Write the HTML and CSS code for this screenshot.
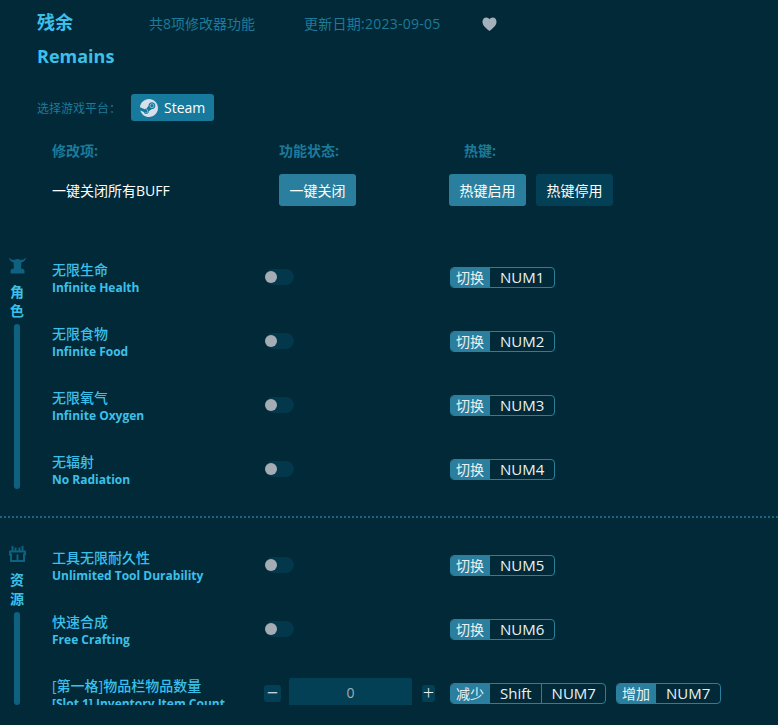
FILE: index.html
```html
<!DOCTYPE html>
<html lang="zh">
<head>
<meta charset="utf-8">
<title>残余 Remains</title>
<link rel="stylesheet" href="styles.css">
</head>
<body>
<div class="app">
  <header class="head">
    <div class="title-row">
      <h1 class="title">残余</h1>
      <span class="meta meta-count">共8项修改器功能</span>
      <span class="meta meta-date">更新日期:2023-09-05</span>
      <svg class="heart" viewBox="0 0 16 15"><path d="M8 15C3 11 .5 8.500 .5 5 .5 2.200 2.500 .5 4.500 .5 6 .5 7.300 1.300 8 2.500 8.700 1.300 10 .5 11.500 .5 13.500 .5 15.500 2.200 15.500 5 15.500 8.500 13 11 8 15z"/></svg>
    </div>
    <h2 class="title-en">Remains</h2>
    <div class="platform">
      <span class="platform-label">选择游戏平台：</span>
      <span class="steam">
        <svg class="steam-icon" viewBox="0 0 24 24"><path d="M11.979 0C5.678 0 .511 4.860 .022 11.037l6.432 2.658c.545-.371 1.203-.59 1.912-.59.063 0 .125.004.188.006l2.861-4.142V8.910c0-2.495 2.028-4.524 4.524-4.524 2.494 0 4.524 2.031 4.524 4.527s-2.030 4.525-4.524 4.525h-.105l-4.076 2.911c0 .052.004.105.004.159 0 1.875-1.515 3.396-3.390 3.396-1.635 0-3.016-1.173-3.331-2.727L.436 15.270C1.862 20.307 6.486 24 11.979 24c6.627 0 11.999-5.373 11.999-12S18.605 0 11.979 0zM7.540 18.210l-1.473-.61c.262.543.714.999 1.314 1.250 1.297.539 2.793-.076 3.332-1.375.263-.63.264-1.319.005-1.949s-.75-1.121-1.377-1.383c-.624-.26-1.290-.249-1.878-.03l1.523.63c.956.4 1.409 1.500 1.009 2.455-.397.957-1.497 1.410-2.454 1.012zm11.415-9.303c0-1.662-1.353-3.015-3.015-3.015-1.665 0-3.015 1.353-3.015 3.015 0 1.665 1.350 3.015 3.015 3.015 1.663 0 3.015-1.350 3.015-3.015zm-5.273-.005c0-1.252 1.013-2.266 2.265-2.266 1.249 0 2.266 1.014 2.266 2.266 0 1.251-1.017 2.265-2.266 2.265-1.253 0-2.265-1.014-2.265-2.265z"/></svg>
        Steam
      </span>
    </div>
  </header>

  <div class="cols">
    <span class="col-name">修改项:</span>
    <span class="col-state">功能状态:</span>
    <span class="col-key">热键:</span>
  </div>

  <div class="master">
    <span class="master-name">一键关闭所有BUFF</span>
    <button class="btn btn-on btn-close">一键关闭</button>
    <button class="btn btn-on">热键启用</button>
    <button class="btn btn-off">热键停用</button>
  </div>

  <div class="list">
    <section class="section section-first">
      <aside class="cat">
        <svg class="cat-icon" viewBox="0 0 17 17"><path d="M0 .5C.3 3 1.500 4.700 4.500 5.300L5 11.500C3 11.500 1.500 12.500 1.500 14V16.500H15.500V14C15.500 12.500 14 11.500 12 11.500L12.500 5.300C15.500 4.700 16.700 3 17 .5 15.500 2.200 13.500 3 11.700 3 10.700 2.300 9.500 1.900 8.500 1.900S6.300 2.300 5.300 3C3.500 3 1.500 2.200 0 .5z"/></svg>
        <span class="cat-char">角</span>
        <span class="cat-char">色</span>
        <span class="cat-bar"></span>
      </aside>
      <div class="rows">
        <div class="row">
          <div class="name"><b>无限生命</b><b>Infinite Health</b></div>
          <span class="toggle"></span>
          <div class="keys"><span class="key"><i>切换</i><em>NUM1</em></span></div>
        </div>
        <div class="row">
          <div class="name"><b>无限食物</b><b>Infinite Food</b></div>
          <span class="toggle"></span>
          <div class="keys"><span class="key"><i>切换</i><em>NUM2</em></span></div>
        </div>
        <div class="row">
          <div class="name"><b>无限氧气</b><b>Infinite Oxygen</b></div>
          <span class="toggle"></span>
          <div class="keys"><span class="key"><i>切换</i><em>NUM3</em></span></div>
        </div>
        <div class="row">
          <div class="name"><b>无辐射</b><b>No Radiation</b></div>
          <span class="toggle"></span>
          <div class="keys"><span class="key"><i>切换</i><em>NUM4</em></span></div>
        </div>
      </div>
    </section>

    <section class="section">
      <aside class="cat">
        <svg class="cat-icon" viewBox="0 0 17 17"><path class="chest" d="M.8 6.500H16.200V9.500H15V16H2V9.500H.8zM3.500 1V6.500M6.500 2.500V6.500M10.500 2.500V6.500M13.500 1V6.500M8.500 9.500V16"/></svg>
        <span class="cat-char">资</span>
        <span class="cat-char">源</span>
        <span class="cat-bar"></span>
      </aside>
      <div class="rows">
        <div class="row">
          <div class="name"><b>工具无限耐久性</b><b>Unlimited Tool Durability</b></div>
          <span class="toggle"></span>
          <div class="keys"><span class="key"><i>切换</i><em>NUM5</em></span></div>
        </div>
        <div class="row">
          <div class="name"><b>快速合成</b><b>Free Crafting</b></div>
          <span class="toggle"></span>
          <div class="keys"><span class="key"><i>切换</i><em>NUM6</em></span></div>
        </div>
        <div class="row">
          <div class="name"><b>[第一格]物品栏物品数量</b><b>[Slot 1] Inventory Item Count</b></div>
          <div class="stepper">
            <span class="step step-minus">−</span>
            <span class="value">0</span>
            <span class="step step-plus">+</span>
          </div>
          <div class="keys">
            <span class="key"><i>减少</i><em>Shift</em><em>NUM7</em></span>
            <span class="key"><i>增加</i><em>NUM7</em></span>
          </div>
        </div>
      </div>
    </section>
  </div>
</div>
</body>
</html>
```

FILE: styles.css
```css
* { box-sizing: border-box; }
html, body { margin: 0; height: 100%; overflow: hidden; }
body {
  background: #012937;
  font-family: "Open Sans", "Noto Sans CJK SC", sans-serif;
  font-size: 14px;
  color: #fff;
}
.app { height: 725px; }

.head { padding: 10px 0 0 37px; }
.title-row { display: flex; align-items: center; height: 24px; }
.title { margin: 0; width: 112px; font-size: 18px; line-height: 24px; font-weight: 700; color: #3cc0ea; }
.meta { margin-top: 2px; font-size: 14px; color: #1d7a99; }
.meta-count { width: 155px; }
.meta-date { width: 178px; letter-spacing: .25px; }
.heart { width: 15px; height: 14px; margin-top: 3px; fill: #a4b1bb; }
.title-en { margin: 10px 0 0; font-size: 18px; line-height: 24px; font-weight: 700; color: #3cc0ea; }
.platform { display: flex; align-items: center; margin-top: 26px; height: 27px; }
.platform-label { width: 94px; font-size: 12px; color: #1d7a99; }
.steam {
  display: flex; align-items: center; gap: 6px;
  width: 83px; height: 27px; padding-left: 9px;
  background: #177a9c; border-radius: 3px;
  font-size: 14px; color: #fff;
}
.steam-icon { width: 18px; height: 18px; fill: #d8dfea; }

.cols { display: flex; margin-top: 21px; padding-left: 52px; height: 18px; line-height: 18px; font-size: 14px; font-weight: 700; color: #1d7a99; }
.col-name { width: 227px; }
.col-state { width: 185px; }

.master { display: flex; align-items: center; margin-top: 14px; padding-left: 52px; height: 32px; }
.master-name { width: 227px; font-size: 14px; }
.btn {
  width: 77px; height: 32px; padding: 0; border: 0; border-radius: 3px;
  font: inherit; font-size: 14px; color: #fff;
}
.btn-on { background: #2a7f9e; }
.btn-off { background: #033f55; margin-left: 10px; }
.btn-close { margin-right: 93px; }

.list { margin-top: 39px; height: 460px; overflow: hidden; }
.section { display: flex; height: 172px; }
.section-first { height: 273px; margin-bottom: 15px; padding-bottom: 15px; border-bottom: 2px dotted #1d6580; }

.cat { display: flex; flex-direction: column; align-items: center; width: 34px; padding-top: 12px; }
.cat-icon { width: 17px; height: 17px; margin-bottom: 8px; fill: #0f6180; }
.chest { fill: none; stroke: #0f6180; stroke-width: 2; }
.cat-char { font-size: 14px; line-height: 19px; font-weight: 700; color: #3cc0ea; }
.cat-bar { flex: 1; width: 6px; margin: 4px 0 12px; background: #0f6180; border-radius: 3px; }
.section:last-child .cat-bar { margin-bottom: 0; }

.rows { padding-left: 18px; }
.row { display: flex; align-items: center; height: 64px; }
.name { display: flex; flex-direction: column; width: 213px; padding-top: 3px; color: #3cc0ea; }
.name b { display: block; margin: -1px 0 1px; line-height: 17px; font-size: 14px; font-weight: 500; white-space: nowrap; }
.name b + b { margin: 0; font-size: 12px; font-weight: 700; }

.toggle { position: relative; display: block; width: 29px; height: 16px; background: #03384c; border-radius: 8px; margin-right: 156px; }
.toggle::before { content: ""; position: absolute; left: 0; top: 2px; width: 12px; height: 12px; border-radius: 50%; background: #a4adb4; }

.keys { display: flex; gap: 10px; }
.key { display: flex; height: 21px; border: 1px solid #2a7f9e; border-radius: 4px; overflow: hidden; font-size: 14px; line-height: 19px; }
.key i { width: 40px; margin-left: -1px; padding-left: 6px; font-style: normal; background: #2a7f9e; color: #e8f2f6; }
.key em { padding: 0 10px; font-size: 15px; font-style: normal; color: #e8f2f6; }
.key em:not(:last-child) { padding-right: 9px; }
.key em + em { padding-right: 9px; border-left: 1px solid #2a7f9e; }

.stepper { display: flex; align-items: center; width: 186px; margin-left: -1px; }
.step { display: block; width: 17px; height: 17px; line-height: 16px; text-align: center; border-radius: 3px; background: #033f55; color: #e8f2f6; font-size: 20px; font-weight: 300; }
.step-plus { width: 13px; }
.value { display: block; width: 123px; height: 30px; margin: 0 10px 0 8px; line-height: 30px; text-align: center; background: #033f55; color: #9db0ba; border-radius: 2px; }
```
